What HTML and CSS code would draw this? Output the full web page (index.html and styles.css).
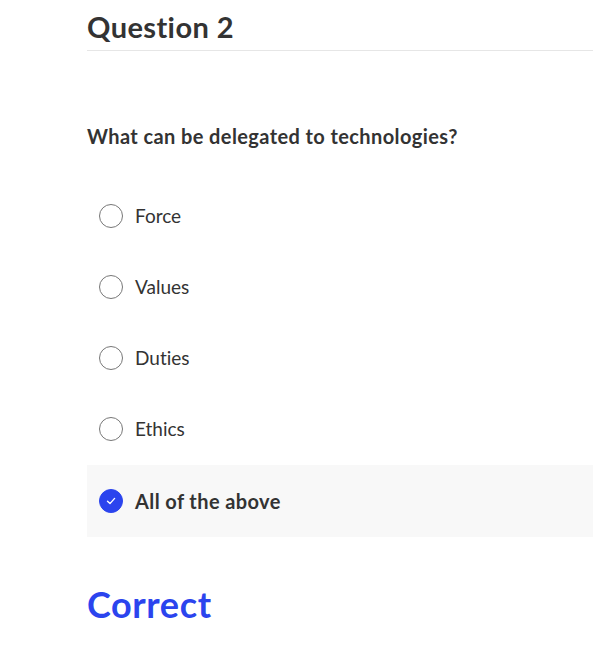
FILE: index.html
```html
<!DOCTYPE html>
<html>
<head>
<meta charset="utf-8">
<link rel="stylesheet" href="styles.css">
</head>
<body>
<div class="quiz">
  <h2 class="title">Question 2</h2>
  <p class="question">What can be delegated to technologies?</p>
  <ul class="options">
    <li class="option"><span class="radio"></span><span class="label">Force</span></li>
    <li class="option"><span class="radio"></span><span class="label">Values</span></li>
    <li class="option"><span class="radio"></span><span class="label">Duties</span></li>
    <li class="option"><span class="radio"></span><span class="label">Ethics</span></li>
    <li class="option selected"><span class="radio checked"><svg width="12" height="12" viewBox="0 0 12 12"><path d="M2.5 6.2 L5 8.6 L9.6 3.4" fill="none" stroke="#fff" stroke-width="1.4" stroke-linecap="round" stroke-linejoin="round"/></svg></span><span class="label">All of the above</span></li>
  </ul>
  <div class="result">Correct</div>
</div>
</body>
</html>
```
FILE: styles.css
```css
html, body { margin: 0; padding: 0; background: #fff; }
body { font-family: Lato, "Open Sans", sans-serif; color: #333; overflow: hidden; font-variant-ligatures: none; }
.quiz { margin-left: 87px; }
.title {
  margin: 0; padding-top: 10px; padding-bottom: 6px;
  font-size: 29px; font-weight: 700; line-height: 34px; letter-spacing: 0.4px;
  border-bottom: 1px solid #e6e6e6; color: #333;
}
.question { margin: 72px 0 0; font-size: 20px; font-weight: 700; line-height: 26px; letter-spacing: 0.4px; }
.options { list-style: none; margin: 32px 0 0; padding: 0; }
.option { display: flex; align-items: center; gap: 12px; height: 71px; padding-left: 12px; font-size: 19px; }
.option:first-child { margin-top: -1px; }
.radio {
  width: 24px; height: 24px; border: 1.5px solid #777; border-radius: 50%;
  box-sizing: border-box; flex: none; display: flex; align-items: center; justify-content: center;
}
.selected { background: #f8f8f8; height: 72px; margin-top: 1px; font-weight: 700; font-size: 20px; letter-spacing: 0.4px; }
.radio.checked { background: #2b44ee; border-color: #2b44ee; }
.result { margin-top: 47px; font-size: 36px; font-weight: 700; color: #2b44ee; line-height: 40px; letter-spacing: 0.6px; }
```
